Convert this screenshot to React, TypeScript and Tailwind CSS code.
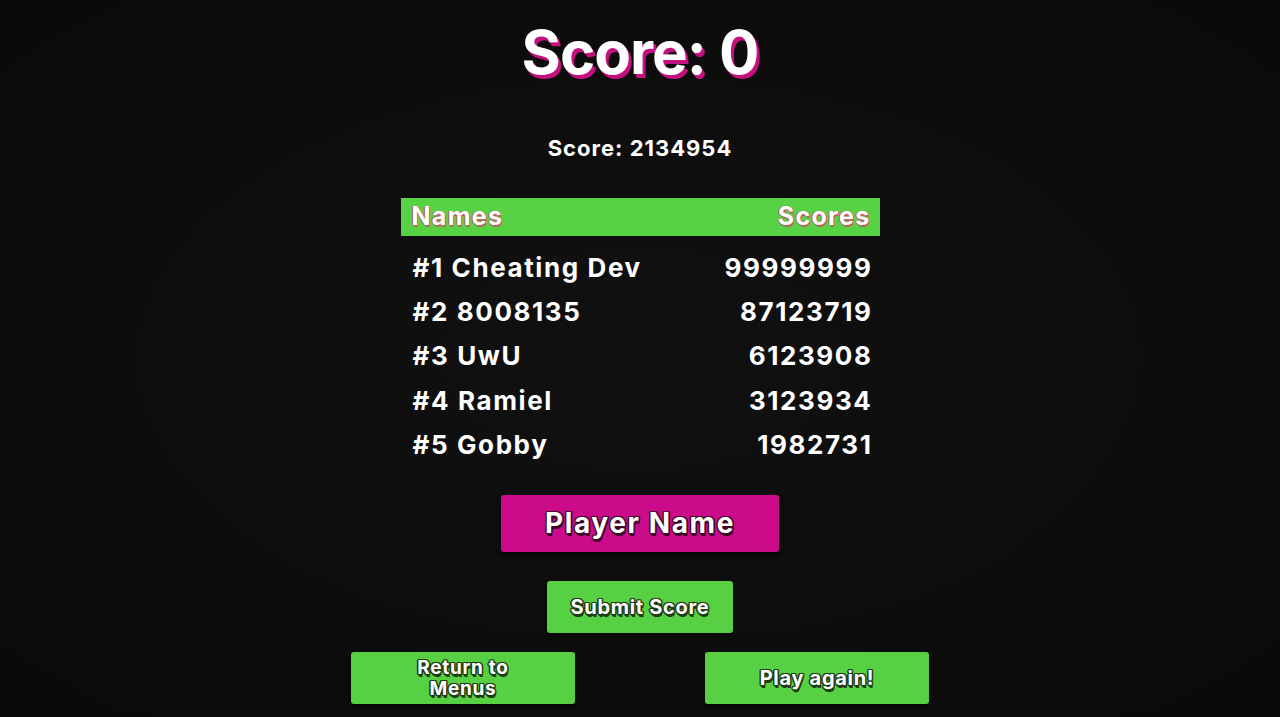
import React from "react";

type Entry = { name: string; score: number };

const leaderboard: Entry[] = [
  { name: "Cheating Dev", score: 99999999 },
  { name: "8008135", score: 87123719 },
  { name: "UwU", score: 6123908 },
  { name: "Ramiel", score: 3123934 },
  { name: "Gobby", score: 1982731 },
];

// outlined label text used on the game buttons
const greenOutline =
  "[text-shadow:1.5px_0_0_#1f3d14,-1.5px_0_0_#1f3d14,0_1.5px_0_#1f3d14,0_-1.5px_0_#1f3d14,1px_1px_0_#1f3d14,-1px_-1px_0_#1f3d14,1px_-1px_0_#1f3d14,-1px_1px_0_#1f3d14,1px_2.5px_0_#1f3d14]";

const GameButton: React.FC<{ children: React.ReactNode; className?: string }> = ({
  children,
  className = "",
}) => (
  <button
    className={`flex flex-col items-center justify-center bg-[#57d043] rounded-[3px] shadow-[0_2px_3px_rgba(0,0,0,0.6)] text-white font-bold tracking-[0.7px] ${greenOutline} ${className}`}
  >
    {children}
  </button>
);

const App: React.FC = () => {
  return (
    <div className="min-h-[717px] w-full bg-[#0d0d0d] bg-[radial-gradient(ellipse_at_center,#111111_0%,#0c0c0c_70%,#0a0a0a_100%)] flex flex-col items-center text-white font-['Inter','Liberation_Sans',sans-serif]">
      <h1 className="mt-[22px] text-[60px] leading-none font-bold tracking-[-1px] [text-shadow:2px_3px_0_#c3117f,3px_4px_0_#c3117f]">
        Score: 0
      </h1>

      <p className="mt-[55px] text-[22px] leading-none font-bold tracking-[1px]">Score: 2134954</p>

      <div className="mt-[39px] w-[479px]">
        <div className="h-[38px] bg-[#57d244] flex items-center justify-between pl-[11px] pr-[9px] text-[25px] font-bold tracking-[1.3px] [text-shadow:1px_2px_0_#b5685c,-1px_0_0_#b5685c,1px_0_0_#b5685c]">
          <span>Names</span>
          <span>Scores</span>
        </div>

        <ul className="mt-[9px] pl-[12px] pr-[7px]">
          {leaderboard.map((e, i) => (
            <li
              key={e.name}
              className="h-[44.4px] flex items-center justify-between text-[26px] font-bold tracking-[1.6px]"
            >
              <span>
                #{i + 1} {e.name}
              </span>
              <span>{e.score}</span>
            </li>
          ))}
        </ul>
      </div>

      <div className="mt-[28px] w-[278px] h-[57px] bg-[#cb0b89] rounded-[3px] shadow-[0_3px_4px_rgba(0,0,0,0.6)] flex items-center justify-center text-[28px] font-bold tracking-[1.6px] [text-shadow:1.5px_0_0_#3d0828,-1.5px_0_0_#3d0828,0_1.5px_0_#3d0828,0_-1.5px_0_#3d0828,1px_1px_0_#3d0828,-1px_-1px_0_#3d0828,1px_-1px_0_#3d0828,-1px_1px_0_#3d0828,1px_3px_0_#3d0828]">
        Player Name
      </div>

      <GameButton className="mt-[29px] w-[186px] h-[52px] text-[20px] leading-none">Submit Score</GameButton>

      <div className="mt-[19px] w-[578px] flex justify-between">
        <GameButton className="w-[224px] h-[52px] text-[19px] leading-[21px]">
          <span className="block">Return to</span>
          <span className="block">Menus</span>
        </GameButton>
        <GameButton className="w-[224px] h-[52px] text-[20px] leading-none">Play again!</GameButton>
      </div>
    </div>
  );
};

export default App;
